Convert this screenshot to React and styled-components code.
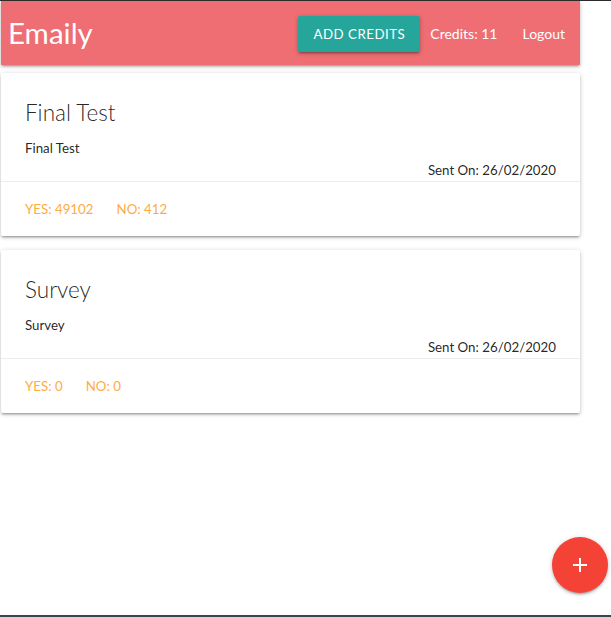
import React from "react";
import styled, { createGlobalStyle } from "styled-components";

const GlobalStyle = createGlobalStyle`
  html {
    font-size: 13.3px;
  }
  body {
    margin: 0;
    border-top: 1px solid #2b2b2b;
    background: #fff;
    font-family: Lato, "Open Sans", Arial, sans-serif;
    color: rgba(0, 0, 0, 0.87);
  }
  body::after {
    content: "";
    position: fixed;
    left: 0;
    right: 0;
    bottom: 0;
    height: 2px;
    background: #37474f;
  }
`;

const Page = styled.div`
  width: 579px;
  margin-left: 1px;
`;

const Nav = styled.nav`
  height: 64px;
  background: #ee6e73;
  display: flex;
  align-items: center;
  justify-content: space-between;
  padding: 0 15px 0 7px;
  box-shadow: 0 2px 2px 0 rgba(0, 0, 0, 0.14), 0 3px 1px -2px rgba(0, 0, 0, 0.12),
    0 1px 5px 0 rgba(0, 0, 0, 0.2);
`;

const Logo = styled.a`
  color: #fff;
  font-size: 29.5px;
  text-decoration: none;
  line-height: 64px;
`;

const Menu = styled.ul`
  display: flex;
  align-items: center;
  list-style: none;
  margin: 0;
  padding: 0;
  gap: 25px;
`;

const NavLink = styled.li`
  color: #fff;
  font-size: 14px;
`;

const CreditsButton = styled.button`
  height: 36px;
  width: 122px;
  padding: 0;
  margin-right: -15px;
  margin-top: 2px;
  border: none;
  border-radius: 2px;
  background: #26a69a;
  color: #fff;
  font-family: inherit;
  font-size: 13.3px;
  text-transform: uppercase;
  letter-spacing: 0.5px;
  box-shadow: 0 2px 2px 0 rgba(0, 0, 0, 0.14), 0 3px 1px -2px rgba(0, 0, 0, 0.12),
    0 1px 5px 0 rgba(0, 0, 0, 0.2);
`;

const Card = styled.div`
  margin: 8px 0 14px;
  background: #fff;
  border-radius: 2px;
  box-shadow: 0 2px 2px 0 rgba(0, 0, 0, 0.14), 0 3px 1px -2px rgba(0, 0, 0, 0.12),
    0 1px 5px 0 rgba(0, 0, 0, 0.2);
`;

const CardContent = styled.div`
  padding: 24px 24px 0;
`;

const CardTitle = styled.span`
  display: block;
  font-size: 22.5px;
  font-weight: 300;
  line-height: 32px;
  margin-bottom: 8px;
`;

const Text = styled.p`
  margin: 0;
  line-height: 22px;
  text-align: ${(p) => (p.$right ? "right" : "left")};
`;

const CardAction = styled.div`
  display: flex;
  gap: 23px;
  padding: 16px 24px;
  border-top: 1px solid rgba(160, 160, 160, 0.2);
`;

const ActionLink = styled.a`
  color: #ffab40;
  line-height: 22px;
  text-decoration: none;
`;

const Fab = styled.a`
  position: fixed;
  right: 3px;
  bottom: 24px;
  width: 56px;
  height: 56px;
  border-radius: 50%;
  background: #f44336;
  display: flex;
  align-items: center;
  justify-content: center;
  box-shadow: 0 2px 2px 0 rgba(0, 0, 0, 0.14), 0 3px 1px -2px rgba(0, 0, 0, 0.12),
    0 1px 5px 0 rgba(0, 0, 0, 0.2);
`;

const surveys = [
  { title: "Final Test", body: "Final Test", sent: "26/02/2020", yes: 49102, no: 412 },
  { title: "Survey", body: "Survey", sent: "26/02/2020", yes: 0, no: 0 },
];

export default function App() {
  return (
    <>
      <GlobalStyle />
      <Page>
        <Nav>
          <Logo>Emaily</Logo>
          <Menu>
            <li>
              <CreditsButton>Add Credits</CreditsButton>
            </li>
            <NavLink>Credits: 11</NavLink>
            <NavLink>Logout</NavLink>
          </Menu>
        </Nav>
        {surveys.map((s) => (
          <Card key={s.title}>
            <CardContent>
              <CardTitle>{s.title}</CardTitle>
              <Text>{s.body}</Text>
              <Text $right>Sent On: {s.sent}</Text>
            </CardContent>
            <CardAction>
              <ActionLink>YES: {s.yes}</ActionLink>
              <ActionLink>NO: {s.no}</ActionLink>
            </CardAction>
          </Card>
        ))}
      </Page>
      <Fab>
        <svg width="16" height="16" viewBox="0 0 16 16">
          <path d="M8 1v14M1 8h14" stroke="#fff" strokeWidth="2" />
        </svg>
      </Fab>
    </>
  );
}
